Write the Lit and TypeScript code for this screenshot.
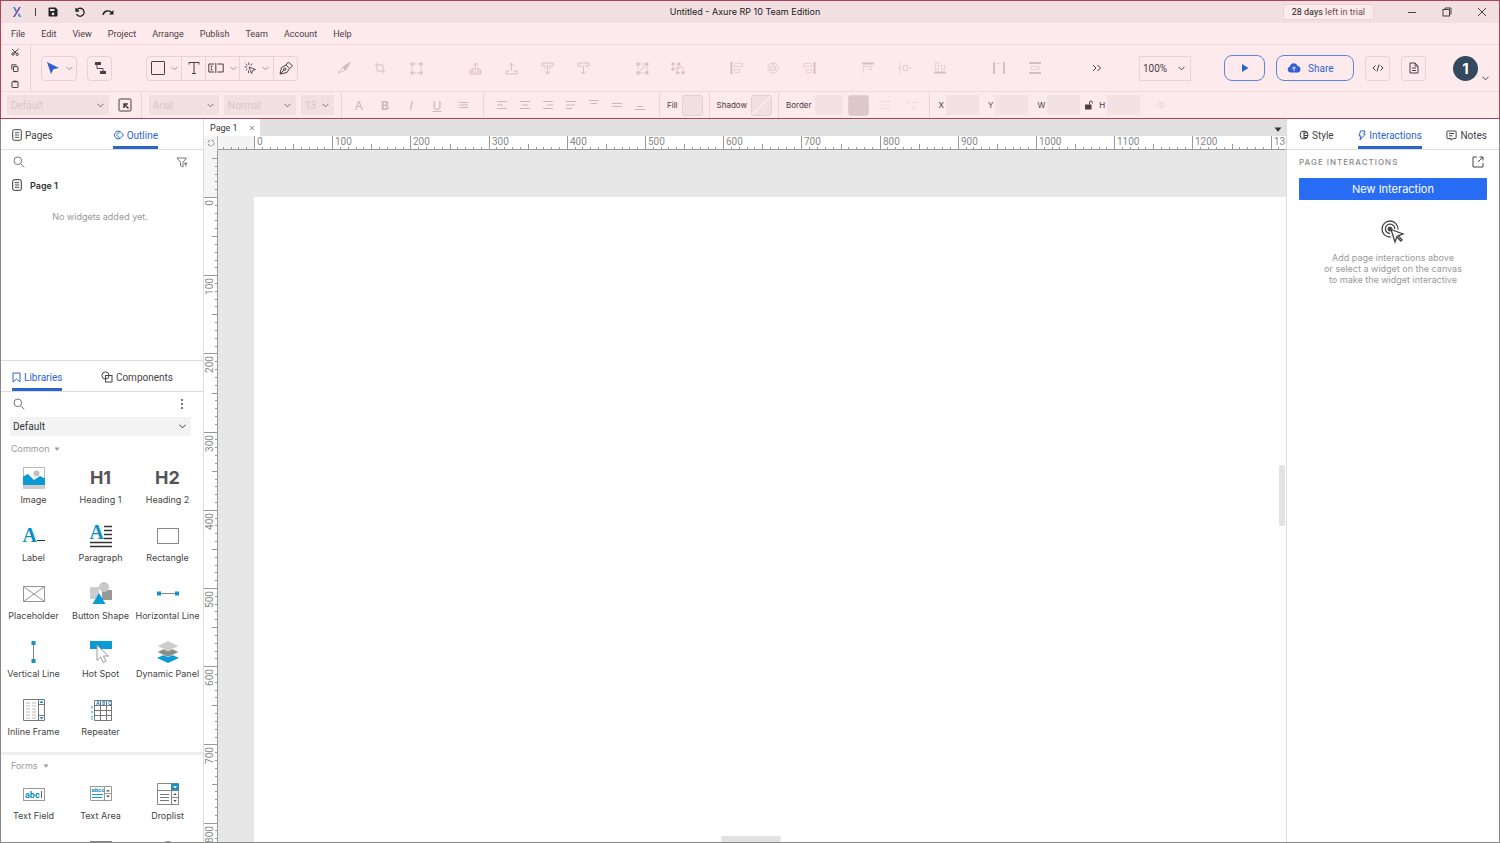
import { LitElement, html, svg, css, TemplateResult, SVGTemplateResult } from "lit";
import { customElement, property, state } from "lit/decorators.js";
import { classMap } from "lit/directives/class-map.js";

type Icon = [number, number, SVGTemplateResult];

const ICONS: Record<string, Icon> = {
  logo: [12, 12, svg`<path d="M2 1h2l2 4-1.200 1.600zM8.200 7.200 10.300 11H8.300L6.700 8.200z" fill="#3f8fc5" stroke="none"/><path d="M9.800 1H8L5.500 5.500 2 11h1.800L6.700 6.200z" fill="#7a3fb0" stroke="none"/>`],
  save: [10, 10, svg`<path d="M1.500.5h6l2 2v6a1 1 0 0 1-1 1h-7a1 1 0 0 1-1-1v-7a1 1 0 0 1 1-1zM2 2v2h4.500V2zM5 5.500a1.400 1.400 0 1 0 0 2.800 1.400 1.400 0 0 0 0-2.800z" fill="currentColor" fill-rule="evenodd" stroke="none"/>`],
  undo: [10, 10, svg`<path d="M1 1v3h3M1.400 3.800A4 4 0 1 1 1.500 7" stroke-width="1.300"/>`],
  redo: [12, 8, svg`<path d="M1 7c.8-4.500 6.500-5.500 9-2" stroke-width="1.400"/><path d="M11.500 2v4.500H7z" fill="currentColor" stroke="none"/>`],
  cut: [8, 8, svg`<path d="M1 1l4.500 4.500M7.500 1 3 5"/><circle cx="2" cy="6" r="1.200"/><circle cx="6.200" cy="6.300" r="1.200"/>`],
  copy: [8, 8, svg`<rect x="2.500" y="2.500" width="4.500" height="5" rx=".5"/><path d="M.8 5.500V.8H5.500"/>`],
  paste: [8, 8, svg`<rect x="1" y="1.500" width="6" height="6" rx=".5"/><path d="M2.500 1.500h3" stroke-width="1.800"/>`],
  pointer: [14, 14, svg`<path d="M1 1l12 6-5.600 1.200L5 13z" fill="currentColor" stroke="none"/>`],
  down: [7, 5, svg`<path d="M.5.800l3 3 3-3"/>`],
  connector: [12, 14, svg`<path d="M1 1h6v3H1zM6 10h6v3H6z" fill="currentColor" stroke="none"/><path d="M3 4v3.500h6V10" stroke-width=".9"/>`],
  rect: [14, 14, svg`<rect x=".5" y=".5" width="13" height="13" rx=".6"/>`],
  text: [12, 14, svg`<path d="M1 3.500V1.500h10v2M6 1.500v11M4 12.500h4"/>`],
  form: [16, 10, svg`<path d="M6 1H.8v8H6M9.500 1h5.700v8H9.500M7.800 0v10"/><path d="M3.500 3v4M2.500 3h2.200M2.500 7h2.200" stroke-width=".7"/>`],
  click: [12, 12, svg`<path d="M5 5l6.500 2.500-2.800 1L7.500 11.500zM4.800.5v2.500M.5 5h2.500M1.600 1.800l1.800 1.700M8.200 1.600 6.600 3.500M1.800 8.200l1.500-1.400M4.500 8.500v2.500" stroke-width=".9"/>`],
  pen: [14, 14, svg`<path d="M1 13 2.500 6.500 7 4l3.500 3.500L8 11.500zM7 4l2.500-3 4 4-3 2.500M1 13l4-4"/><circle cx="5.800" cy="8.200" r="1.200"/>`],
  knife: [14, 12, svg`<path d="M1 11 6 5l7-4.500L8.500 8 5 9.500zM6 5l2.500 3"/><path d="M6 5l7-4.500L8.500 8z" fill="currentColor"/>`],
  crop: [12, 12, svg`<path d="M3 .5V9h8.500M.5 3H9v8.500"/>`],
  points: [13, 13, svg`<path d="M4 2h5M4 11h5M2 4v5M11 4v5" stroke-dasharray="2 1"/><path d="M.5.5h3v3h-3zM9.500.5h3v3h-3zM.5 9.500h3v3h-3zM9.500 9.500h3v3h-3z" fill="currentColor" stroke="none"/>`],
  front: [13, 13, svg`<path d="M6.500 8V1M4 3.500 6.500 1 9 3.500M5 8H1v4h11V8H8M3 6.500h2M8 6.500h2M1 10h11"/>`],
  forward: [13, 13, svg`<path d="M6.500 9V1M4 3.500 6.500 1 9 3.500M4.500 9H1v3h11V9H8.500"/>`],
  back: [13, 13, svg`<path d="M1 1h11v3H8M5 4H1V1M6.500 3v9M4 9.500 6.500 12 9 9.500M3 6h2M8 6h2"/>`],
  backward: [13, 13, svg`<path d="M1 1h11v3H8M5 4H1V1M6.500 4v8M4 9.500 6.500 12 9 9.500"/>`],
  group: [13, 13, svg`<path d="M2 2h9v9H2z" stroke-dasharray="2 1"/><path d="M3 10l7-7"/><path d="M.5.5h3v3h-3zM9.500.5h3v3h-3zM.5 9.500h3v3h-3zM9.500 9.500h3v3h-3z" fill="currentColor" stroke="none"/>`],
  ungroup: [14, 13, svg`<path d="M2 2h6v5H2zM6 5h6v6H6z" stroke-dasharray="2 1"/><path d="M.5.5h2.500V3H.500zM7 .5h2.500V3H7zM.5 6h2.500v2.500H.500zM11 9.500h2.500V12H11zM5 9.500h2.500V12H5z" fill="currentColor" stroke="none"/>`],
  alignL: [14, 12, svg`<path d="M1.500 0v12" stroke-width="2"/><path d="M4.500 1.500h8v3h-8zM4.500 7.500h5v3h-5z" stroke-width=".6"/>`],
  alignC: [12, 12, svg`<circle cx="6" cy="6" r="5" stroke-width=".7"/><path d="M3.500 5h5v3h-5zM6 0v4" stroke-width=".8"/>`],
  alignR: [14, 12, svg`<path d="M12.500 0v12" stroke-width="2"/><path d="M1.500 1.500h8v3h-8zM4.500 7.500h5v3h-5z" stroke-width=".6"/>`],
  alignT: [12, 12, svg`<path d="M0 1.500h12" stroke-width="2"/><path d="M1.500 10.500v-6h8v3h-5" stroke-width=".6"/>`],
  alignM: [13, 12, svg`<path d="M3 1.500h-1v9h1M5.500 3.500h4v5h-4zM0 6h2M11 6h2" stroke-width=".7"/>`],
  alignB: [12, 12, svg`<path d="M0 10.500h12" stroke-width="2"/><path d="M1.500.5h3v7h-3zM7.500 3.500h3v4h-3z" stroke-width=".6"/>`],
  distH: [12, 12, svg`<path d="M1 0v12M11 0v12" stroke-width="2"/><path d="M3.500 1.500h5" stroke-width=".5"/>`],
  distV: [12, 12, svg`<path d="M0 1h12M0 11h12" stroke-width="2"/><path d="M2 4.500h8v3H2z" stroke-width=".6"/>`],
  more: [10, 8, svg`<path d="M1 1l3 3-3 3M5.500 1l3 3-3 3"/>`],
  play: [8, 10, svg`<path d="M1 1l6.500 4L1 9z" fill="currentColor" stroke="none"/>`],
  cloud: [14, 12, svg`<path d="M3.500 10.500a3 3 0 0 1-.6-5.900A4 4 0 0 1 10.600 4a3.300 3.300 0 0 1 .2 6.500z" fill="currentColor" stroke="none"/><path d="M7 9V5M5.200 6.500 7 4.700l1.800 1.800" stroke="#fdeaec"/>`],
  code: [12, 8, svg`<path d="M3.500 1.500 1 4l2.500 2.500M8.500 1.500 11 4 8.500 6.500M7 .5l-2 7"/>`],
  doc: [10, 12, svg`<path d="M1 1h5l3 3v7H1zM6 1v3h3M3 6h4M3 8.500h4"/>`],
  min: [10, 10, svg`<path d="M1 5.500h8"/>`],
  restore: [10, 10, svg`<rect x="1" y="2.500" width="6.500" height="6.500"/><path d="M3 2.500V1h6v6H7.500"/>`],
  close: [10, 10, svg`<path d="M1 1l8 8M9 1 1 9"/>`],
  closeTab: [6, 6, svg`<path d="M1 1l4 4M5 1 1 5" stroke-width=".8"/>`],
  corner: [14, 14, svg`<rect x="1" y="1" width="12" height="12" rx="1"/><path d="M10.500 10.500 6 6M6 10V6h4" stroke-width="1.600"/>`],
  bullets: [12, 8, svg`<path d="M1 1.500h1M3 1.500h8M1 4h1M3 4h8M1 6.500h1M3 6.500h8"/>`],
  tl: [12, 10, svg`<path d="M1 1.500h10M1 5h6M1 8.500h10"/>`],
  tc: [12, 10, svg`<path d="M1 1.500h10M3 5h6M1 8.500h10"/>`],
  tr: [12, 10, svg`<path d="M1 1.500h10M5 5h6M1 8.500h10"/>`],
  tj: [12, 10, svg`<path d="M1 1.500h10M1 5h9M1 8.500h6"/>`],
  vt: [12, 12, svg`<path d="M1 1.500h10M3 4.500h6"/>`],
  vm: [12, 12, svg`<path d="M1 4.500h10M1 7.500h10"/>`],
  vb: [12, 12, svg`<path d="M3 7.500h6M1 10.500h10"/>`],
  lines: [12, 10, svg`<path d="M0 1.500h3M5 1.500h7M2 5h2M6 5h5M2 8.500h9" stroke-width=".7"/>`],
  arrows: [12, 10, svg`<path d="M0 2.500h4M6 2.500h6M4 6.500h6M6 8.500h4" stroke-width=".7"/>`],
  lock: [8, 10, svg`<path d="M0 4.500h6.500v5H0z" fill="currentColor" stroke="none"/><path d="M4.500 4.500V2.500a1.400 1.400 0 0 1 2.800 0v1"/>`],
  eye: [12, 8, svg`<path d="M1 4c2.500-3.500 7.500-3.500 10 0-2.500 3.500-7.500 3.500-10 0z" stroke-width=".8"/><circle cx="6" cy="4" r="1.300" stroke-width=".8"/>`],
  page: [10, 12, svg`<rect x=".7" y=".7" width="8.600" height="10.600" rx="1.500"/><path d="M2.800 3.700h4.400M2.800 6h4.400M2.800 8.300h4.400" stroke-width=".9"/>`],
  outline: [11, 10, svg`<path d="M4 1 1 5l3 4M7 1.500 10.500 5 7 8.500 3.500 5z"/><path d="M4 1l3 .5M4 9l3-.5"/>`],
  search: [12, 12, svg`<circle cx="4.800" cy="4.800" r="3.800"/><path d="M7.600 7.600 11.300 11.300"/>`],
  filter: [12, 11, svg`<path d="M1 1h9.500L7 5.200V10L4.500 8.500V5.200zM8 6.800h3.500M9.800 5v4.500"/>`],
  bookmark: [9, 11, svg`<path d="M1 1h7v9L4.500 7 1 10z"/>`],
  components: [12, 12, svg`<circle cx="4.500" cy="4.500" r="3.600"/><rect x="4.500" y="4.500" width="6.500" height="6.500"/>`],
  dots: [4, 12, svg`<path d="M1 1h2v2H1zM1 5h2v2H1zM1 9h2v2H1z" fill="currentColor" stroke="none"/>`],
  caret: [6, 4, svg`<path d="M.5.500h5L3 3.700z" fill="currentColor" stroke="none"/>`],
  caretBig: [8, 5, svg`<path d="M.5.500h7L4 4.700z" fill="currentColor" stroke="none"/>`],
  origin: [8, 8, svg`<circle cx="4" cy="4" r="3" stroke-dasharray="3.400 1.300"/>`],
  style: [10, 10, svg`<circle cx="5" cy="5" r="4"/><path d="M5 1v8M5 3.500l3-1M5 5.500h4M5 7.500l3 0"/>`],
  bolt: [8, 11, svg`<path d="M2.500 1h4.500L5.700 4h1.600L2 10l1-4H1z"/>`],
  notes: [11, 11, svg`<path d="M1.500 1h8a.6.6 0 0 1 .6.6V8a.6.6 0 0 1-.6.6H6.800L5 10.200V8.600H1.500A.6.6 0 0 1 .9 8V1.600A.6.6 0 0 1 1.500 1zM3 3.500h5M3 5.800h3.500"/>`],
  popout: [12, 12, svg`<path d="M5 1H1v10h10V7M7.500 1H11v3.500M11 1 6 6"/>`],
  target: [24, 24, svg`<path d="M9.500 18A8 8 0 1 1 17 10.500M9 14.500A4.700 4.700 0 1 1 13.800 10" stroke-width="1.300"/><circle cx="9" cy="10" r="2" fill="currentColor"/><path d="M10 10.500l12 4.500-5 1.800 4 4-1.200 1.200-4-4L14 23z" fill="#fff" stroke-width="1.300"/>`],

  image: [24, 24, svg`<rect x="1.500" y="1.500" width="21" height="21" stroke="#bbb" fill="#fff"/><path d="M1 18h22v5H1z" fill="#ccc" stroke="none"/><circle cx="14.500" cy="7.500" r="3" fill="#c4bfba" stroke="none"/><path d="M1 10.500 6 8l6 6 6-4 5 2.500V19H1z" fill="#0a9bd4" stroke="none"/>`],
  label: [24, 24, svg`<text x="0.500" y="18" class="serif">A</text><path d="M15 16.500h8" stroke="#333"/>`],
  paragraph: [24, 24, svg`<text x="0.500" y="15" class="serif">A</text><path d="M15 2.500h8M15 6.500h8M15 10.500h8M15 14.500h8M1 18.500h22M1 22.500h22" stroke="#333" stroke-width="1.300"/>`],
  rectangle: [24, 24, svg`<rect x="1.500" y="4.500" width="21" height="15" stroke="#888"/>`],
  placeholder: [24, 24, svg`<path d="M1.500 4.500h21v15h-21zM1.500 4.500l21 15M22.500 4.500l-21 15" stroke="#888" stroke-width=".9"/>`],
  shapes: [24, 26, svg`<path d="M1 6h9v12H1z" fill="#ccc" stroke="none"/><path d="M13 9h10v10H13z" fill="#999" stroke="none"/><circle cx="15" cy="6" r="5" fill="#c8c8c8" stroke="none"/><path d="M10 12l6.500 11h-13z" fill="#0a9bd4" stroke="none"/>`],
  hline: [24, 24, svg`<path d="M2 11.500h20" stroke="#888"/><path d="M1 9.500h4v4H1zM19 9.500h4v4h-4z" fill="#1590cc" stroke="none"/>`],
  vline: [24, 24, svg`<path d="M11.500 2v20" stroke="#888"/><path d="M9.500 1h4v4h-4zM9.500 19h4v4h-4z" fill="#1590cc" stroke="none"/>`],
  hotspot: [24, 24, svg`<path d="M1 1h22v8H1z" fill="#0a9bd4" stroke="none"/><path d="M8 5v15.500l3.700-3.500 2.600 5.500 2.700-1.300-2.600-5.200h5z" fill="#fff" stroke="#999"/>`],
  layers: [24, 24, svg`<path d="M12 13l11 5-11 5-11-5z" fill="#0a9bd4" stroke="none"/><path d="M12 7l11 5-11 5-11-5z" fill="#8f8b88" stroke="#fff" stroke-width=".5"/><path d="M12 1l11 5-11 5L1 6z" fill="#ccc" stroke="#fff" stroke-width=".5"/>`],
  iframe: [24, 24, svg`<path d="M1.500 1.500h21v21h-21zM16.500 1.500v21M16.500 6.500h6M16.500 17.500h6" stroke="#777"/><path d="M4 5h4M10 5h4M4 8h4M10 8h4M4 11h4M10 11h4M4 14h4M10 14h4M4 17h4M10 17h4M4 20h4M10 20h4" stroke="#bbb"/><path d="M17.500 5l2-2.500 2 2.500zM17.500 19l2 2.500 2-2.500z" fill="#1590cc" stroke="none"/>`],
  repeater: [24, 24, svg`<path d="M5.500 2.500h17v20h-17zM5.500 7.500h17M5.500 12.500h17M5.500 17.500h17M11.500 2.500v20M17.500 2.500v20" stroke="#777"/><text x="7" y="6.500" class="tiny">A</text><text x="13" y="6.500" class="tiny">B</text><text x="19" y="6.500" class="tiny">C</text><path d="M3 8v3M3 13v3M3 18v4" stroke="#0a9bd4" stroke-dasharray="2 .7"/>`],
  field: [24, 24, svg`<rect x="1.500" y="6.500" width="21" height="12" stroke="#999"/><text x="3" y="16" class="abc">abc</text><path d="M19.500 9v7" stroke="#333" stroke-width=".8"/>`],
  area: [24, 24, svg`<path d="M1.500 4.500h21v14h-21zM15.500 4.500v14M15.500 11.500h7" stroke="#999"/><text x="2.500" y="10" class="abc small">abcc</text><path d="M3 12.500h11M3 15.500h10" stroke="#0a9bd4" stroke-width="1.200"/><path d="M17 9.500l2-2 2 2zM17 13.500l2 2 2-2z" fill="#555" stroke="none"/>`],
  droplist: [24, 24, svg`<path d="M1.500 1.500h21v21h-21zM1.500 8.500h21M15.500 1.500v21M15.500 15.500h7" stroke="#888"/><path d="M15.500 1.500h7v7h-7z" fill="#1590bf" stroke="none"/><path d="M17 4l2 2.500L21 4z" fill="#fff" stroke="none"/><path d="M4 12.500h9M4 15.500h9M4 18.500h9" stroke="#777"/><path d="M17.200 13l1.800-2 1.800 2zM17.200 18l1.800 2 1.800-2z" fill="#555" stroke="none"/>`],
  listbox: [24, 24, svg`<rect x="1.500" y="1.500" width="21" height="21" stroke="#888"/>`],
  radio: [24, 24, svg`<circle cx="12" cy="9.500" r="8" stroke="#888"/>`],
};

@customElement("ui-icon")
class UiIcon extends LitElement {
  @property() name = "";
  static styles = css`
    :host { display: inline-flex; flex: none; }
    svg { display: block; fill: none; stroke: currentColor; overflow: visible; }
    .serif { font: bold 20px "Liberation Serif", serif; fill: #0a8fc4; stroke: none; }
    .tiny { font: bold 5px Inter, sans-serif; fill: #0a8fc4; stroke: none; }
    .abc { font: bold 9px Roboto, sans-serif; fill: #0a8fc4; stroke: none; }
    .small { font-size: 6px; }
  `;
  render() {
    const [w, h, body] = ICONS[this.name];
    return html`<svg width=${w} height=${h} viewBox="0 0 ${w} ${h}" aria-hidden="true">${body}</svg>`;
  }
}

const icon = (name: string) => html`<ui-icon name=${name}></ui-icon>`;
const iconButton = (name: string, label: string, cls = "") =>
  html`<button class="icon-btn ${cls}" aria-label=${label}>${icon(name)}</button>`;

const STEP = 7.82;

@customElement("axure-ruler")
class AxureRuler extends LitElement {
  @property() axis = "x";
  @property({ type: Number }) origin = 36;
  @state() private extent = 0;
  private observer = new ResizeObserver(([e]) => {
    this.extent = this.axis === "x" ? e.contentRect.width : e.contentRect.height;
  });
  static styles = css`
    :host { display: block; overflow: hidden; min-width: 0; min-height: 0; background: #fff; }
    svg { display: block; width: 100%; height: 100%; }
    line { stroke: #999; shape-rendering: crispEdges; }
    rect { fill: #f4f4f4; }
    text { font: 10px "Liberation Sans Narrow", Roboto, sans-serif; fill: #888; }
  `;
  connectedCallback() {
    super.connectedCallback();
    this.observer.observe(this);
  }
  disconnectedCallback() {
    super.disconnectedCallback();
    this.observer.disconnect();
  }
  render() {
    const x = this.axis === "x";
    const marks: SVGTemplateResult[] = [];
    for (let i = -5; ; i++) {
      const p = Math.round(this.origin + i * STEP);
      if (p > this.extent) break;
      if (p < 0) continue;
      const len = i % 10 === 0 ? 14 : i % 5 === 0 ? 6 : 3;
      marks.push(
        x
          ? svg`<line x1=${p} x2=${p} y1=${14 - len} y2="14"></line>`
          : svg`<line y1=${p} y2=${p} x1=${14 - len} x2="14"></line>`
      );
      if (i % 10 === 0)
        marks.push(
          x
            ? svg`<text x=${p + 3} y="9">${i * 10}</text>`
            : svg`<text text-anchor="end" transform="translate(9 ${p + 3}) rotate(-90)">${i * 10}</text>`
        );
    }
    return html`<svg aria-hidden="true">
      ${x
        ? svg`<rect width=${this.origin} height="14"></rect>`
        : svg`<rect width="14" height=${this.origin}></rect>`}
      ${marks}
    </svg>`;
  }
}

const tabStyles = css`
  .tabs { display: flex; justify-content: space-between; height: 31px; padding: 0 12px 0 11px; border-bottom: 1px solid #ddd; flex: none; }
  .tab { display: flex; align-items: center; gap: 3px; font: 10px Roboto, sans-serif; color: #444; border-bottom: 3px solid transparent; padding: 5px 0 0; }
  .tab.on { color: #2b66d0; border-bottom-color: #2b66d0; }
`;

const baseStyles = css`
  * { box-sizing: border-box; }
  button, input, select { font: inherit; color: inherit; background: none; border: 0; margin: 0; padding: 0; border-radius: 0; }
  .icon-btn { display: inline-flex; align-items: center; justify-content: center; flex: none; }
  .picker { display: inline-grid; align-items: center; flex: none; font: 10px Roboto, sans-serif; }
  .picker select { grid-area: 1 / 1; appearance: none; width: 100%; height: 100%; padding: 0 4px; opacity: 1; }
  .picker ui-icon { grid-area: 1 / 1; justify-self: end; margin-right: 5px; pointer-events: none; }
`;

@customElement("axure-header")
class AxureHeader extends LitElement {
  static styles = [
    baseStyles,
    css`
      :host { display: block; background: #fdeaec; border: 1px solid #a9455a; color: #4a3d43; font-size: 9px; }
      .title { display: grid; grid-template-columns: 1fr auto 1fr; align-items: center; height: 22px; padding-right: 10px; background: #f1dfe1; color: #222; }
      .title > span { padding-bottom: 2px; }
      .quick { display: flex; align-items: center; gap: 17px; padding-left: 10px; }
      .bar { width: 1px; height: 8px; background: #444; margin: 0 -5px; }
      .win { display: flex; align-items: center; justify-content: flex-end; gap: 25px; padding-right: 2px; color: #444; }
      .trial { background: #fdeaec; border: 1px solid #ecd2d5; border-radius: 2px; height: 16px; padding: 0 8px; margin-right: 8px; white-space: nowrap; color: #6b4a54; font-family: Roboto, sans-serif; }
      .trial b { font-weight: 400; color: #222; }
      .menu { display: flex; align-items: center; gap: 16px; height: 22px; padding-left: 10px; border-bottom: 1px solid #eed9dc; font-family: Roboto, sans-serif; }
      .tools { display: flex; align-items: center; height: 47px; border-bottom: 1px solid #eed9dc; }
      .clip { display: flex; flex-direction: column; justify-content: space-around; align-items: center; width: 30px; height: 47px; padding-right: 2px; border-right: 1px solid #ecd2d5; }
      .box { display: flex; height: 25px; border: 1px solid #eccfd3; border-radius: 4px; }
      .box > button { height: 23px; min-width: 23px; }
      .box > button + button { border-left: 1px solid #eccfd3; }
      .box .wide { min-width: 34px; gap: 6px; }
      .wide ui-icon + ui-icon { color: #a58f94; }
      .ptr { margin-left: 10px; }
      .ptr > button { color: #2f62d0; }
      .con { margin-left: 10px; }
      .draw { margin-left: 34px; }
      .draw > button { min-width: 24px; }
      .ops { display: flex; gap: 23px; margin-left: 28px; color: #d6bfc2; }
      .ops div { display: flex; }
      .ops button { width: 36px; height: 24px; }
      .right { display: flex; align-items: center; gap: 11px; margin-left: auto; padding-right: 10px; }
      .zoom { width: 52px; height: 25px; border: 1px solid #ecd2d5; margin: 0 22px 0 26px; }
      .zoom select { padding-left: 3px; }
      .blue { height: 26px; border: 1px solid #5f86dc; border-radius: 8px; color: #2f62d0; }
      .run { width: 41px; }
      .share { width: 78px; gap: 7px; font: 10px Roboto, sans-serif; justify-content: flex-start; padding-left: 10px; }
      .sq { width: 25px; height: 25px; border: 1px solid #ecd2d5; border-radius: 3px; }
      .user { display: flex; align-items: flex-end; gap: 4px; margin-left: 16px; }
      .avatar { width: 25px; height: 25px; border-radius: 50%; background: #34495e; color: #fff; font: 700 15px/25px Inter, sans-serif; text-align: center; }
      .format { display: flex; align-items: center; height: 26px; font-size: 8px; }
      .format .picker { height: 20px; background: #f1dfe1; color: #dcc6c9; margin-right: 5px; }
      .format .picker ui-icon { color: #806d72; }
      .p1 { width: 102px; margin-left: 6px; }
      .p2 { width: 70px; }
      .p3 { width: 72px; }
      .p4 { width: 33px; }
      .sep { width: 1px; height: 26px; background: #ecd2d5; flex: none; }
      .gap { display: flex; margin: 0 9px 0 4px; }
      .set { display: flex; color: #cdb6b9; padding: 0 7px 0 4px; }
      .set button { width: 26px; height: 20px; font-size: 12px; }
      .set.fonts { padding: 0 2px 0 7px; }
      .set.algn { padding: 0 8px 0 6px; }
      .set.algn button { width: 23px; }
      .set u { text-decoration: underline; }
      .pair { display: flex; align-items: center; gap: 4px; padding: 0 6px 0 7px; }
      .sw { width: 21px; height: 21px; border: 1px solid #e3cfd2; border-radius: 3px; background: #f1dfe1; }
      .sw.dark { background: #dcc8ca; margin-left: 2px; }
      .sw.diag { background: linear-gradient(135deg, #f1dfe1 48%, #fff 50%, #f1dfe1 52%); }
      .num { width: 33px; height: 20px; background: #f3e1e3; }
      .pair .num.b { width: 27px; }
      .xy { display: flex; align-items: center; gap: 9px; padding-left: 8px; }
      .xy label { display: flex; align-items: center; gap: 2px; }
      .xy ui-icon { margin: 0 -3px 0 -4px; }
      .xy button ui-icon { margin: 0; }
      .faint { color: #e6d0d3; width: 23px; }
    `,
  ];

  private tool(names: string[]) {
    return html`<div>${names.map((n) => iconButton(n, n))}</div>`;
  }
  private pick(label: string, cls: string) {
    return html`<span class="picker ${cls}"><select aria-label=${label} disabled><option>${label}</option></select>${icon("down")}</span>`;
  }

  render() {
    return html`
      <div class="title">
        <div class="quick">
          ${icon("logo")}<span class="bar"></span>
          ${iconButton("save", "Save")}${iconButton("undo", "Undo")}${iconButton("redo", "Redo")}
        </div>
        <span>Untitled - Axure RP 10 Team Edition</span>
        <div class="win">
          <button class="trial"><b>28 days</b> left in trial</button>
          ${iconButton("min", "Minimize")}${iconButton("restore", "Restore")}${iconButton("close", "Close")}
        </div>
      </div>
      <nav class="menu">
        ${["File", "Edit", "View", "Project", "Arrange", "Publish", "Team", "Account", "Help"].map((m) => html`<button>${m}</button>`)}
      </nav>
      <div class="tools">
        <div class="clip">${iconButton("cut", "Cut")}${iconButton("copy", "Copy")}${iconButton("paste", "Paste")}</div>
        <div class="box ptr"><button class="icon-btn wide" aria-label="Select">${icon("pointer")}${icon("down")}</button></div>
        <div class="box con">${iconButton("connector", "Connect")}</div>
        <div class="box draw">
          <button class="icon-btn wide" aria-label="Shapes">${icon("rect")}${icon("down")}</button>
          ${iconButton("text", "Text")}
          <button class="icon-btn wide" aria-label="Form controls">${icon("form")}${icon("down")}</button>
          <button class="icon-btn wide" aria-label="Hot spots">${icon("click")}${icon("down")}</button>
          ${iconButton("pen", "Pen")}
        </div>
        <div class="ops">
          ${this.tool(["knife", "crop", "points"])} ${this.tool(["front", "forward", "back", "backward"])}
          ${this.tool(["group", "ungroup"])} ${this.tool(["alignL", "alignC", "alignR"])}
          ${this.tool(["alignT", "alignM", "alignB"])} ${this.tool(["distH", "distV"])}
        </div>
        <div class="right">
          ${iconButton("more", "More tools")}
          <span class="picker zoom"><select aria-label="Zoom"><option>100%</option></select>${icon("down")}</span>
          ${iconButton("play", "Preview", "blue run")}
          <button class="icon-btn blue share">${icon("cloud")}Share</button>
          ${iconButton("code", "Inspect", "sq")}${iconButton("doc", "Document", "sq")}
          <div class="user"><span class="avatar">1</span>${iconButton("down", "Account")}</div>
        </div>
      </div>
      <div class="format">
        ${this.pick("Default", "p1")}
        <span class="gap">${iconButton("corner", "Update style")}</span><span class="sep"></span>
        <span class="set fonts">${this.pick("Arial", "p2")}${this.pick("Normal", "p3")}${this.pick("13", "p4")}</span>
        <span class="sep"></span>
        <div class="set">
          <button aria-label="Text color">A</button><button aria-label="Bold"><b>B</b></button>
          <button aria-label="Italic"><i>I</i></button><button aria-label="Underline"><u>U</u></button>
          ${iconButton("bullets", "Bullets")}
        </div>
        <span class="sep"></span>
        <div class="set algn">${["tl", "tc", "tr", "tj", "vt", "vm", "vb"].map((n) => iconButton(n, n))}</div>
        <span class="sep"></span>
        <div class="pair">Fill<button class="sw" aria-label="Fill color"></button></div>
        <span class="sep"></span>
        <div class="pair">Shadow<button class="sw diag" aria-label="Shadow"></button></div>
        <span class="sep"></span>
        <div class="pair">
          <label for="bw">Border</label><input class="num b" id="bw" />
          <button class="sw dark" aria-label="Border color"></button>
          ${iconButton("lines", "Line style", "faint")}${iconButton("arrows", "Arrow style", "faint")}
        </div>
        <span class="sep"></span>
        <div class="xy">
          <label>X <input class="num" /></label><label>Y <input class="num" /></label>
          <label>W <input class="num" /></label>${icon("lock")}<label>H <input class="num" /></label>
          ${iconButton("eye", "Visibility", "faint")}
        </div>
      </div>
    `;
  }
}

@customElement("axure-sidebar")
class AxureSidebar extends LitElement {
  @state() private library = "Default";
  static styles = [
    baseStyles,
    tabStyles,
    css`
      :host { display: flex; flex-direction: column; min-height: 0; overflow: hidden; border-right: 1px solid #ddd; background: #fff; color: #444; font-size: 9px; }
      .outline { flex: 0 0 242px; border-bottom: 1px solid #ddd; }
      .outline .tabs { padding-right: 45px; }
      .libs .tabs { padding-right: 30px; }
      .find { display: flex; align-items: center; justify-content: space-between; height: 24px; padding: 0 15px 0 12px; color: #777; }
      .find input { flex: 1; min-width: 0; height: 20px; }
      .libs .find { padding-right: 19px; }
      .node { display: flex; align-items: center; gap: 8px; height: 22px; padding-left: 11px; font-size: 9px; font-weight: 600; color: #333; }
      .none { margin: 15px 4px 0 0; text-align: center; line-height: 12px; color: #999; }
      .libs { flex: 1; min-height: 0; overflow: hidden; }
      .picker.lib { display: grid; height: 19px; margin: 1px 12px 0 9px; background: #f3f3f3; color: #333; }
      .lib select { padding-left: 3px; }
      .cat { display: flex; align-items: center; gap: 5px; height: 19px; margin: 3px 0 0 10px; color: #999; }
      .grid { display: grid; grid-template-columns: repeat(3, 1fr); margin-left: -1px; padding-right: 2px; }
      .item { display: flex; flex-direction: column; align-items: center; gap: 4px; height: 58px; padding-top: 8px; line-height: 12px; white-space: nowrap; color: #444; }
      .glyph { display: flex; align-items: center; height: 24px; font-size: 18px; font-weight: 700; color: #555; }
      .forms { margin-top: 4px; border-top: 3px solid #eee; }
      .forms .cat { height: 17px; margin-top: 2px; }
    `,
  ];

  private item([name, ic]: string[]) {
    return html`<button class="item"><span class="glyph">${ICONS[ic] ? icon(ic) : ic}</span>${name}</button>`;
  }

  render() {
    const common = [
      ["Image", "image"], ["Heading 1", "H1"], ["Heading 2", "H2"],
      ["Label", "label"], ["Paragraph", "paragraph"], ["Rectangle", "rectangle"],
      ["Placeholder", "placeholder"], ["Button Shape", "shapes"], ["Horizontal Line", "hline"],
      ["Vertical Line", "vline"], ["Hot Spot", "hotspot"], ["Dynamic Panel", "layers"],
      ["Inline Frame", "iframe"], ["Repeater", "repeater"],
    ];
    const forms = [["Text Field", "field"], ["Text Area", "area"], ["Droplist", "droplist"]];
    return html`
      <section class="outline">
        <div class="tabs">
          <button class="tab">${icon("page")}Pages</button>
          <button class="tab on">${icon("outline")}Outline</button>
        </div>
        <div class="find">${icon("search")}<input aria-label="Search outline" />${iconButton("filter", "Filter")}</div>
        <div class="node">${icon("page")}Page 1</div>
        <p class="none">No widgets added yet.</p>
      </section>
      <section class="libs">
        <div class="tabs">
          <button class="tab on">${icon("bookmark")}Libraries</button>
          <button class="tab">${icon("components")}Components</button>
        </div>
        <div class="find">${icon("search")}<input aria-label="Search libraries" />${iconButton("dots", "Library options")}</div>
        <span class="picker lib"><select aria-label="Library"><option>${this.library}</option></select>${icon("down")}</span>
        <button class="cat">Common ${icon("caret")}</button>
        <div class="grid">${common.map((c) => this.item(c))}</div>
        <div class="forms">
          <button class="cat">Forms ${icon("caret")}</button>
          <div class="grid">
            ${forms.map((f) => this.item(f))}
            <span></span>
            <button class="item" aria-label="List Box">${icon("listbox")}</button>
            <button class="item" aria-label="Radio Button">${icon("radio")}</button>
          </div>
        </div>
      </section>
    `;
  }
}

@customElement("axure-canvas")
class AxureCanvas extends LitElement {
  static styles = [
    baseStyles,
    css`
      :host { display: grid; grid-template: 17px 14px 1fr / 14px 1fr; min-width: 0; min-height: 0; font: 9px Roboto, sans-serif; color: #333; overflow: hidden; }
      .bar { grid-column: 1 / 3; display: flex; justify-content: space-between; align-items: stretch; background: #e0e0e0; }
      .page-tab { display: flex; align-items: center; gap: 11px; padding: 0 5px 0 6px; background: #fff; }
      .page-tab button { display: flex; color: #777; }
      .list { padding: 3px 4px 0 0; }
      .origin { display: flex; align-items: center; justify-content: center; color: #888; background: #f4f4f4; border-right: 1px solid #bbb; }
      axure-ruler { border-bottom: 1px solid #999; }
      axure-ruler.v { border-bottom: 0; border-right: 1px solid #999; }
      .view { position: relative; background: #e7e7e7; padding: 47px 0 0 36px; display: flex; min-height: 0; }
      .sheet { flex: 1; background: #fff; }
      .thumb { position: absolute; background: #e2e2e2; border-radius: 2px; }
      .thumb.v { right: 1px; top: 45.5%; width: 6px; height: 61px; }
      .thumb.h { bottom: 0; left: 47.1%; width: 60px; height: 6px; }
    `,
  ];
  render() {
    return html`
      <div class="bar">
        <span class="page-tab">Page 1 <button aria-label="Close tab">${icon("closeTab")}</button></span>
        ${iconButton("caretBig", "Open pages", "list")}
      </div>
      <span class="origin">${icon("origin")}</span>
      <axure-ruler axis="x" origin="36"></axure-ruler>
      <axure-ruler class="v" axis="y" origin="47"></axure-ruler>
      <div class="view"><div class="sheet"></div><span class="thumb v"></span><span class="thumb h"></span></div>
    `;
  }
}

@customElement("axure-inspector")
class AxureInspector extends LitElement {
  @state() private active = "Interactions";
  static styles = [
    baseStyles,
    tabStyles,
    css`
      :host { display: block; background: #fff; border-left: 1px solid #ddd; color: #444; font-size: 9px; overflow: hidden; }
      .tabs { padding-left: 12px; }
      .head { display: flex; align-items: center; justify-content: space-between; height: 24px; padding: 0 15px 0 12px; color: #888; }
      h2 { margin: 0; font-size: 8px; font-weight: 500; letter-spacing: 1px; text-transform: uppercase; }
      .head button { color: #444; }
      .new { display: block; width: calc(100% - 24px); height: 22px; margin: 4px 12px 0; background: #286cf5; color: #fff; font-size: 11px; border-radius: 1px; }
      .hint { display: flex; flex-direction: column; align-items: center; gap: 9px; margin-top: 19px; }
      .hint p { margin: 0; text-align: center; line-height: 11px; color: #999; }
    `,
  ];
  render() {
    const tabs: [string, string][] = [["Style", "style"], ["Interactions", "bolt"], ["Notes", "notes"]];
    return html`
      <div class="tabs">
        ${tabs.map(([n, i]) => html`<button class=${classMap({ tab: true, on: n === this.active })} @click=${() => (this.active = n)}>${icon(i)}${n}</button>`)}
      </div>
      <div class="head"><h2>Page Interactions</h2>${iconButton("popout", "Open editor")}</div>
      <button class="new">New Interaction</button>
      <div class="hint">
        ${icon("target")}
        <p>Add page interactions above<br />or select a widget on the canvas<br />to make the widget interactive</p>
      </div>
    `;
  }
}

@customElement("app-root")
class AppRoot extends LitElement {
  static styles = css`
    :host { display: flex; flex-direction: column; height: 100vh; box-sizing: border-box; overflow: hidden; font-family: Inter, "Liberation Sans", sans-serif; }
    main { flex: 1; min-height: 0; box-sizing: border-box; display: grid; grid-template-columns: 203px minmax(0, 1fr) 213px; grid-template-rows: minmax(0, 1fr); border: 1px solid #888; border-top: 0; }
  `;
  render(): TemplateResult {
    return html`
      <axure-header></axure-header>
      <main>
        <axure-sidebar></axure-sidebar>
        <axure-canvas></axure-canvas>
        <axure-inspector></axure-inspector>
      </main>
    `;
  }
}
